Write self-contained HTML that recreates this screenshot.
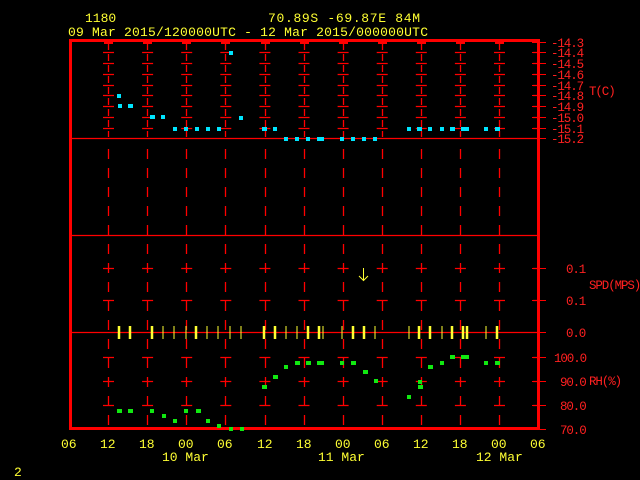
<!DOCTYPE html>
<html><head><meta charset="utf-8"><style>
html,body{margin:0;padding:0;background:#000;width:640px;height:480px;overflow:hidden}
svg{display:block}
text{font-family:"Liberation Mono","DejaVu Sans Mono",monospace;font-size:13px}
.y{fill:#ffff33}.r{fill:#ff2020}
.r text{font-size:12.5px;letter-spacing:-1.1px}
</style></head><body>
<svg width="640" height="480" viewBox="0 0 640 480" xmlns="http://www.w3.org/2000/svg">
<text class="y" x="85" y="22">1180</text>
<text class="y" x="268" y="22" textLength="152">70.89S  -69.87E   84M</text>
<text class="y" x="68" y="36" textLength="360">09 Mar 2015/120000UTC - 12 Mar 2015/000000UTC</text>
<g stroke="#ff0000" fill="none">
<g stroke-width="1.3">
<path d="M108.5 43V137M147.5 43V137M186.5 43V137M225.5 43V137M265.5 43V137M304.5 43V137M343.5 43V137M382.5 43V137M421.5 43V137M460.5 43V137M499.5 43V137" stroke-dasharray="7,4"/>
<path d="M108.5 149V428M147.5 149V428M186.5 149V428M225.5 149V428M265.5 149V428M304.5 149V428M343.5 149V428M382.5 149V428M421.5 149V428M460.5 149V428M499.5 149V428" stroke-dasharray="10,9"/>
</g>
<path d="M103 52.5H540M103 63.5H540M103 74.5H540M103 85.5H540M103 95.5H540M103 106.5H540M103 117.5H540M103 128.5H540M103 268.5H540M103 300.5H540M103 357.5H540M103 381.5H540M103 405.5H540" stroke-dasharray="11,28.1" stroke-width="1.2"/>
<path d="M532 42.5H546M532 52.5H546M532 63.5H546M532 74.5H546M532 85.5H546M532 95.5H546M532 106.5H546M532 117.5H546M532 128.5H546M532 138.5H546M532 268.5H546M532 300.5H546M532 332.5H546M532 357.5H546M532 381.5H546M532 405.5H546M532 429.5H546" stroke-width="1"/>
<path d="M70 138.5H540M70 235.5H540M70 332.5H540" stroke-width="1.3"/>
<rect x="70.5" y="40.5" width="468" height="388" stroke-width="3"/>
<path d="M104 42.5h9M143 42.5h9M182 42.5h9M221 42.5h9M261 42.5h9M300 42.5h9M339 42.5h9M378 42.5h9M417 42.5h9M456 42.5h9M495 42.5h9" stroke-width="3"/>
</g>
<g class="r">
<text x="551" y="47">-14.3</text><text x="551" y="57">-14.4</text><text x="551" y="68">-14.5</text><text x="551" y="79">-14.6</text><text x="551" y="90">-14.7</text><text x="551" y="100">-14.8</text><text x="551" y="111">-14.9</text><text x="551" y="122">-15.0</text><text x="551" y="133">-15.1</text><text x="551" y="143">-15.2</text>
<text x="589" y="95">T(C)</text>
<text x="566" y="273">0.1</text><text x="566" y="305">0.1</text><text x="566" y="337">0.0</text>
<text x="589" y="289">SPD(MPS)</text>
<text x="554" y="362">100.0</text><text x="560" y="386">90.0</text><text x="560" y="410">80.0</text><text x="560" y="434">70.0</text>
<text x="589" y="385">RH(%)</text>
</g>
<g fill="#00e5ff">
<rect x="117" y="94" width="4" height="4"/><rect x="118" y="104" width="4" height="4"/><rect x="128" y="104" width="5" height="4"/>
<rect x="150" y="115" width="5" height="4"/><rect x="161" y="115" width="4" height="4"/>
<rect x="173" y="127" width="4" height="4"/><rect x="184" y="127" width="4" height="4"/><rect x="195" y="127" width="4" height="4"/><rect x="206" y="127" width="4" height="4"/><rect x="217" y="127" width="4" height="4"/>
<rect x="229" y="51" width="4" height="4"/><rect x="239" y="116" width="4" height="4"/>
<rect x="262" y="127" width="5" height="4"/><rect x="273" y="127" width="4" height="4"/>
<rect x="284" y="137" width="4" height="4"/><rect x="295" y="137" width="4" height="4"/><rect x="306" y="137" width="4" height="4"/><rect x="317" y="137" width="7" height="4"/>
<rect x="340" y="137" width="4" height="4"/><rect x="351" y="137" width="4" height="4"/><rect x="362" y="137" width="4" height="4"/><rect x="373" y="137" width="4" height="4"/>
<rect x="407" y="127" width="4" height="4"/><rect x="417" y="127" width="5" height="4"/><rect x="428" y="127" width="4" height="4"/><rect x="440" y="127" width="4" height="4"/><rect x="450" y="127" width="5" height="4"/><rect x="461" y="127" width="8" height="4"/><rect x="484" y="127" width="4" height="4"/><rect x="495" y="127" width="5" height="4"/>
</g>
<g stroke="#ffff33">
<path d="M119 326V339M130 326V339M152 326V339M196 326V339M264 326V339M275 326V339M308 326V339M319 326V339M353 326V339M364 326V339M419 326V339M430 326V339M452 326V339M463 326V339M467 326V339M497 326V339" stroke-width="2.5"/>
<path d="M163 326V339M174 326V339M186 326V339M207 326V339M218 326V339M230 326V339M241 326V339M286 326V339M297 326V339M323 326V339M342 326V339M375 326V339M409 326V339M442 326V339M486 326V339" stroke-width="1"/>
<path d="M363.5 268V280M359 276l4.5 4.5 4.5-4.5" stroke-width="1" fill="none"/>
</g>
<g fill="#11e811">
<rect x="117" y="409" width="5" height="4"/><rect x="128" y="409" width="5" height="4"/><rect x="150" y="409" width="4" height="4"/><rect x="162" y="414" width="4" height="4"/><rect x="173" y="419" width="4" height="4"/><rect x="184" y="409" width="4" height="4"/><rect x="196" y="409" width="5" height="4"/><rect x="206" y="419" width="4" height="4"/><rect x="217" y="424" width="4" height="4"/><rect x="229" y="427" width="4" height="4"/><rect x="240" y="427" width="4" height="4"/>
<rect x="262" y="385" width="5" height="4"/><rect x="273" y="375" width="5" height="4"/><rect x="284" y="365" width="4" height="4"/><rect x="295" y="361" width="5" height="4"/><rect x="306" y="361" width="5" height="4"/><rect x="317" y="361" width="7" height="4"/><rect x="340" y="361" width="4" height="4"/><rect x="351" y="361" width="5" height="4"/><rect x="363" y="370" width="5" height="4"/><rect x="374" y="379" width="4" height="4"/>
<rect x="407" y="395" width="4" height="4"/><rect x="418" y="385" width="5" height="4"/><rect x="418" y="380" width="4" height="4"/><rect x="428" y="365" width="5" height="4"/><rect x="440" y="361" width="4" height="4"/><rect x="450" y="355" width="5" height="4"/><rect x="461" y="355" width="8" height="4"/><rect x="484" y="361" width="4" height="4"/><rect x="495" y="361" width="5" height="4"/>
</g>
<g class="y">
<text x="61" y="448">06</text><text x="100" y="448">12</text><text x="139" y="448">18</text><text x="178" y="448">00</text><text x="217" y="448">06</text><text x="257" y="448">12</text><text x="296" y="448">18</text><text x="335" y="448">00</text><text x="374" y="448">06</text><text x="413" y="448">12</text><text x="452" y="448">18</text><text x="491" y="448">00</text><text x="530" y="448">06</text>
<text x="162" y="461">10 Mar</text><text x="318" y="461">11 Mar</text><text x="476" y="461">12 Mar</text>
<text x="14" y="476">2</text>
</g>
</svg>
</body></html>
